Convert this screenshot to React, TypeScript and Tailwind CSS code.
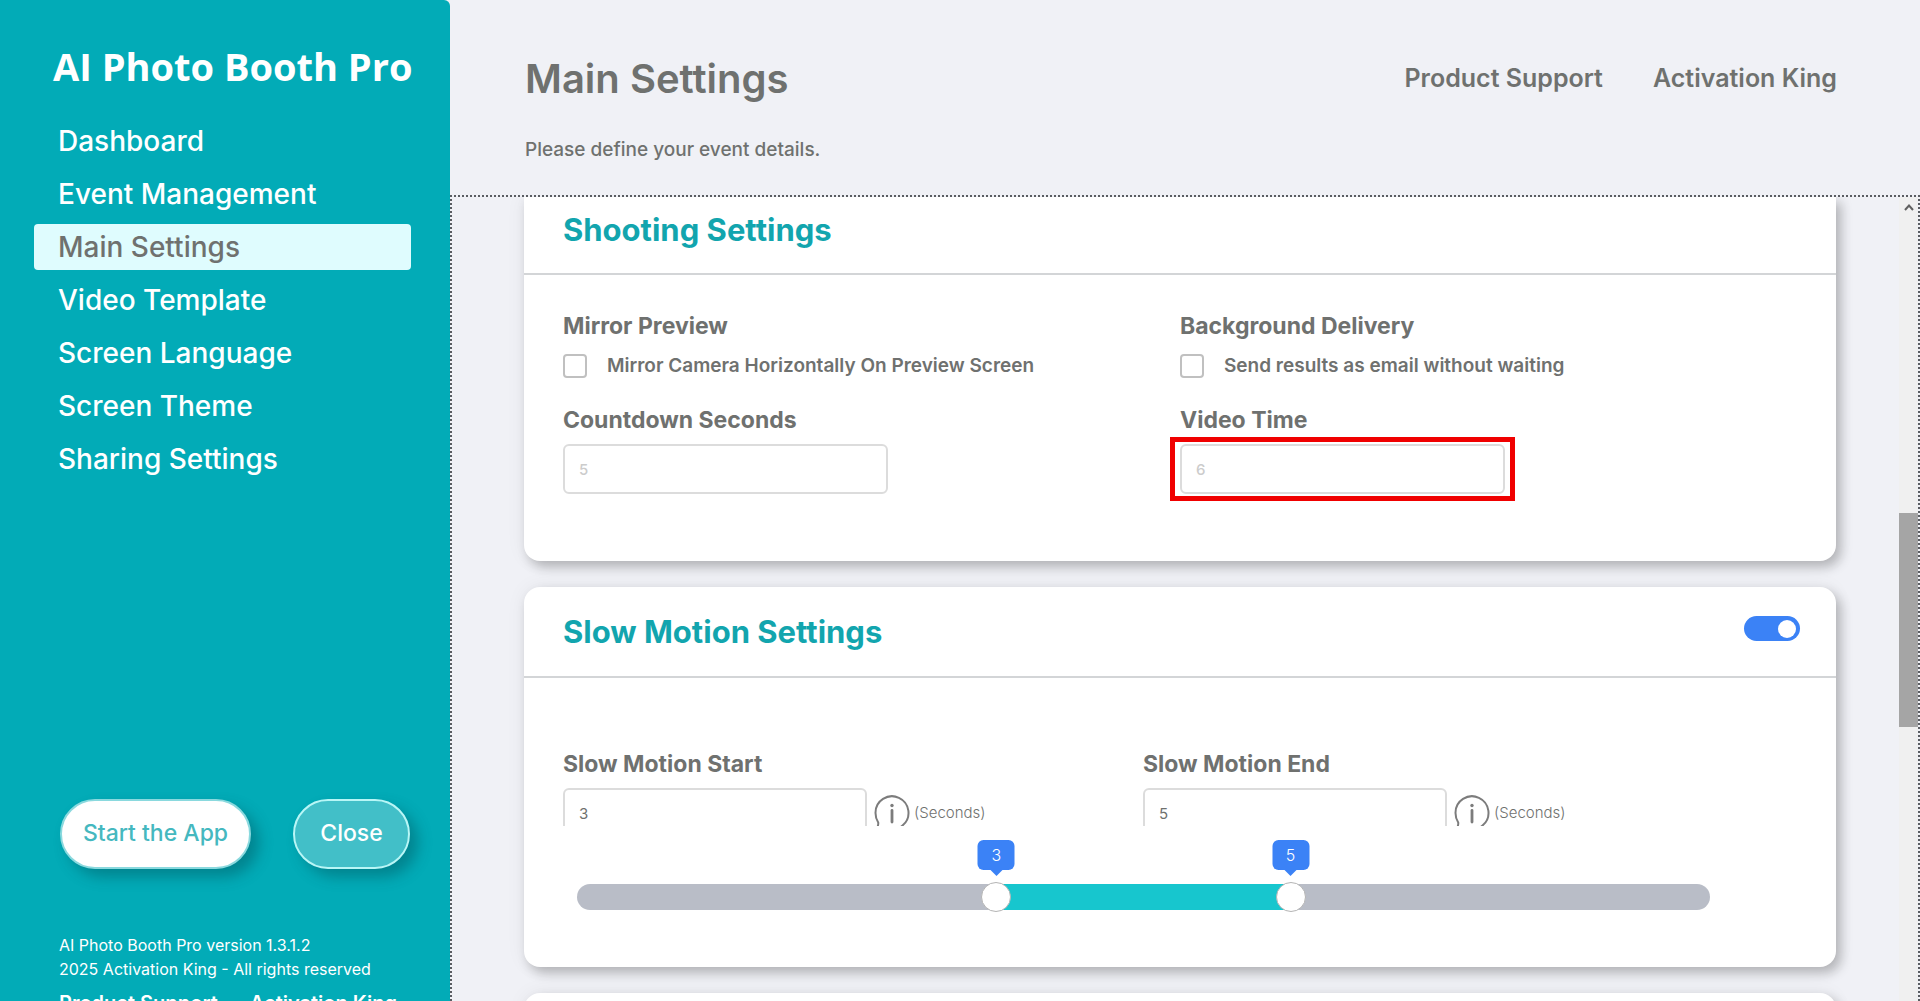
import { useState } from 'react'

interface NavItem {
  label: string
  active?: boolean
}

const NAV: NavItem[] = [
  { label: 'Dashboard' },
  { label: 'Event Management' },
  { label: 'Main Settings', active: true },
  { label: 'Video Template' },
  { label: 'Screen Language' },
  { label: 'Screen Theme' },
  { label: 'Sharing Settings' },
]

const SLIDER_MIN = 0.25
const SLIDER_MAX = 7.75

const CARD = 'shrink-0 bg-white shadow-[5px_6px_12px_rgba(0,0,0,0.24),0_0_20px_rgba(0,0,0,0.06)]'
const CARD_TITLE = 'text-[31px] leading-9 font-bold text-[#12a5ae]'
const FIELD_TITLE = 'block text-[23px] leading-8 font-bold'
const TEXT_INPUT = 'block h-[50px] rounded-md border-2 border-[#dcdcdc] bg-white px-3.5 text-[15px] outline-none placeholder:font-medium placeholder:text-[#cccccc]'

function InfoIcon() {
  return (
    <svg width="36" height="36" viewBox="0 0 36 36" fill="none" stroke="#7c7c7c" strokeWidth="2" strokeLinecap="round" aria-hidden="true">
      <path d="M3 33.5c.8-2 1.6-4 1.2-6C2.6 25 1.5 21.5 1.5 18a16.5 16.5 0 1 1 27 12.5l-3 2.5" />
      <circle cx="18" cy="10.5" r="1.7" fill="#7c7c7c" stroke="none" />
      <path d="M18 15.5v11.5" strokeWidth="2.8" />
    </svg>
  )
}

function CheckField({ id, title, label }: { id: string; title: string; label: string }) {
  return (
    <div>
      <h3 className={FIELD_TITLE}>{title}</h3>
      <div className="mt-2 flex h-8 items-center gap-5">
        <input id={id} type="checkbox" className="size-6 appearance-none rounded border-2 border-[#c0c0c0] bg-white checked:bg-[#3b82f6]" />
        <label htmlFor={id} className="text-[19px] leading-7 font-semibold">{label}</label>
      </div>
    </div>
  )
}

function SecondsField({ id, label, value, onChange }: {
  id: string
  label: string
  value: number
  onChange: (v: number) => void
}) {
  return (
    <div className="h-[78px] overflow-hidden">
      <label htmlFor={id} className={FIELD_TITLE}>{label}</label>
      <div className="mt-2 flex items-center">
        <input
          id={id}
          type="text"
          value={value}
          onChange={e => onChange(Number(e.target.value) || 0)}
          className={`${TEXT_INPUT} w-[304px]`}
        />
        <span className="ml-[7px]"><InfoIcon /></span>
        <span className="ml-1 text-[15px] font-light">(Seconds)</span>
      </div>
    </div>
  )
}

function Thumb({ label, value, onChange }: { label: string; value: number; onChange: (v: number) => void }) {
  const ratio = (value - SLIDER_MIN) / (SLIDER_MAX - SLIDER_MIN)
  return (
    <>
      <input
        type="range"
        aria-label={label}
        min={SLIDER_MIN}
        max={SLIDER_MAX}
        step={0.25}
        value={value}
        onChange={e => onChange(Number(e.target.value))}
        className="pointer-events-none absolute inset-0 h-full w-full appearance-none bg-transparent [&::-webkit-slider-thumb]:pointer-events-auto [&::-webkit-slider-thumb]:size-[30px] [&::-webkit-slider-thumb]:appearance-none [&::-webkit-slider-thumb]:rounded-full [&::-webkit-slider-thumb]:border [&::-webkit-slider-thumb]:border-[#b4b4b4] [&::-webkit-slider-thumb]:bg-white"
      />
      <output
        className="absolute bottom-10 flex h-[30px] w-[37px] -translate-x-1/2 items-center justify-center rounded-md bg-[#3b82f6] text-base font-light text-white"
        style={{ left: `calc(15px + (100% - 30px) * ${ratio})` }}
      >
        {value}
        <span className="absolute top-full border-x-[6px] border-t-[6px] border-x-transparent border-t-[#3b82f6]" />
      </output>
    </>
  )
}

export default function App() {
  const [start, setStart] = useState(3)
  const [end, setEnd] = useState(5)

  return (
    <div className="flex h-screen overflow-hidden bg-[#f0f1f6] font-['Inter',sans-serif] text-[#6f716f]">
      {/* Sidebar */}
      <aside className="flex w-[450px] shrink-0 flex-col overflow-hidden rounded-tr-md bg-[#02abb7] text-white">
        <h1 className="mt-9 pl-[53px] font-['Open_Sans',sans-serif] text-[38px] leading-[60px] font-bold whitespace-nowrap">AI Photo Booth Pro</h1>
        <nav className="mt-[22px] mr-[39px] ml-[34px] flex flex-col gap-[7px]">
          {NAV.map(item => (
            <a
              key={item.label}
              href="#"
              className={`flex h-[46px] items-center rounded px-6 text-[28px] font-medium ${item.active ? 'bg-[#dffcfe] text-[#6f716f]' : ''}`}
            >
              {item.label}
            </a>
          ))}
        </nav>
        <div className="mt-auto flex justify-between pr-10 pl-[60px]">
          <button className="h-[70px] w-[191px] rounded-full border-2 border-[#8ad9de] bg-white pb-0.5 text-[23px] font-medium text-[#45b8bf] shadow-[8px_8px_14px_rgba(0,60,70,0.35)]">
            Start the App
          </button>
          <button className="h-[70px] w-[117px] rounded-full border-2 border-[#b8f6f6] bg-[#42bfc8] pb-0.5 text-[23px] font-medium shadow-[8px_8px_14px_rgba(0,60,70,0.35)]">
            Close
          </button>
        </div>
        <footer className="mt-16 h-[68px] pl-[59px] whitespace-nowrap">
          <p className="text-base leading-6">AI Photo Booth Pro version 1.3.1.2</p>
          <p className="text-base leading-6">2025 Activation King - All rights reserved</p>
          <div className="mt-2 flex gap-8 text-xl font-semibold">
            <a href="#">Product Support</a>
            <a href="#">Activation King</a>
          </div>
        </footer>
      </aside>

      <main className="flex min-w-0 flex-1 flex-col">
        <header className="flex h-[195px] shrink-0 justify-between pt-[54px] pr-[83px] pl-[75px]">
          <div>
            <h2 className="text-[40px] leading-[50px] font-semibold">Main Settings</h2>
            <p className="mt-8 text-[19px] leading-7 font-medium">Please define your event details.</p>
          </div>
          <div className="flex gap-[50px] text-[25px] leading-[48px] font-semibold">
            <a href="#">Product Support</a>
            <a href="#">Activation King</a>
          </div>
        </header>

        {/* Scroll area */}
        <div className="flex min-h-0 flex-1 border-2 border-b-0 border-dotted border-[#5a5d62]">
          <div className="flex min-w-0 flex-1 flex-col gap-[26px] overflow-hidden pr-[63px] pl-[72px]">
            <section className={`${CARD} rounded-b-2xl`}>
              <div className="flex h-[78px] items-center border-b-2 border-[#d3d5d7] px-[39px] pb-2.5">
                <h2 className={CARD_TITLE}>Shooting Settings</h2>
              </div>
              <div className="grid grid-cols-2 gap-y-[22px] px-[39px] pt-[35px] pb-[67px]">
                <CheckField id="mirror" title="Mirror Preview" label="Mirror Camera Horizontally On Preview Screen" />
                <CheckField id="delivery" title="Background Delivery" label="Send results as email without waiting" />
                <div>
                  <label htmlFor="countdown" className={FIELD_TITLE}>Countdown Seconds</label>
                  <input id="countdown" type="text" placeholder="5" className={`${TEXT_INPUT} mt-2 w-[325px]`} />
                </div>
                <div>
                  <label htmlFor="videotime" className={FIELD_TITLE}>Video Time</label>
                  <div className="relative mt-2 w-[325px]">
                    <input id="videotime" type="text" placeholder="6" className={`${TEXT_INPUT} w-full`} />
                    <span className="pointer-events-none absolute -inset-x-2.5 -inset-y-[7px] border-[5px] border-[#f00000]" />
                  </div>
                </div>
              </div>
            </section>

            <section className={`${CARD} rounded-2xl`}>
              <div className="flex h-[91px] items-center justify-between border-b-2 border-[#d3d5d7] pr-9 pl-[39px]">
                <h2 className={CARD_TITLE}>Slow Motion Settings</h2>
                <input
                  type="checkbox"
                  role="switch"
                  aria-label="Slow Motion"
                  defaultChecked
                  className="mb-1.5 flex h-[25px] w-14 appearance-none items-center rounded-full bg-[#c0c0c0] px-1 before:size-[18px] before:rounded-full before:bg-white checked:justify-end checked:bg-[#3b82f6]"
                />
              </div>
              <div className="pt-[70px] pr-[113px] pb-[57px] pl-[39px]">
                <div className="grid grid-cols-2">
                  <SecondsField id="start" label="Slow Motion Start" value={start} onChange={setStart} />
                  <SecondsField id="end" label="Slow Motion End" value={end} onChange={setEnd} />
                </div>
                <div className="relative mr-[13px] ml-3.5 mt-[58px] flex h-[26px] rounded-full bg-[#b9bdc7]">
                  <div
                    className="absolute inset-y-0 bg-[#17c6ce]"
                    style={{
                      left: `${((start - SLIDER_MIN) / (SLIDER_MAX - SLIDER_MIN)) * 100}%`,
                      right: `${((SLIDER_MAX - end) / (SLIDER_MAX - SLIDER_MIN)) * 100}%`,
                    }}
                  />
                  <Thumb label="Slow motion start" value={start} onChange={setStart} />
                  <Thumb label="Slow motion end" value={end} onChange={setEnd} />
                </div>
              </div>
            </section>

            <section className={`${CARD} h-24 rounded-2xl`} />
          </div>

          {/* Scrollbar */}
          <div className="flex w-[19px] shrink-0 flex-col items-center bg-[#f0f0f0]">
            <svg className="mt-[7px] shrink-0" width="10" height="7" viewBox="0 0 10 7" fill="none" stroke="#606060" strokeWidth="2" aria-hidden="true">
              <path d="M1 6l4-4.5L9 6" />
            </svg>
            <div className="h-3/8 shrink-0" />
            <div className="h-[214px] w-full shrink-0 bg-[#a5a5a5]" />
          </div>
        </div>
      </main>
    </div>
  )
}
